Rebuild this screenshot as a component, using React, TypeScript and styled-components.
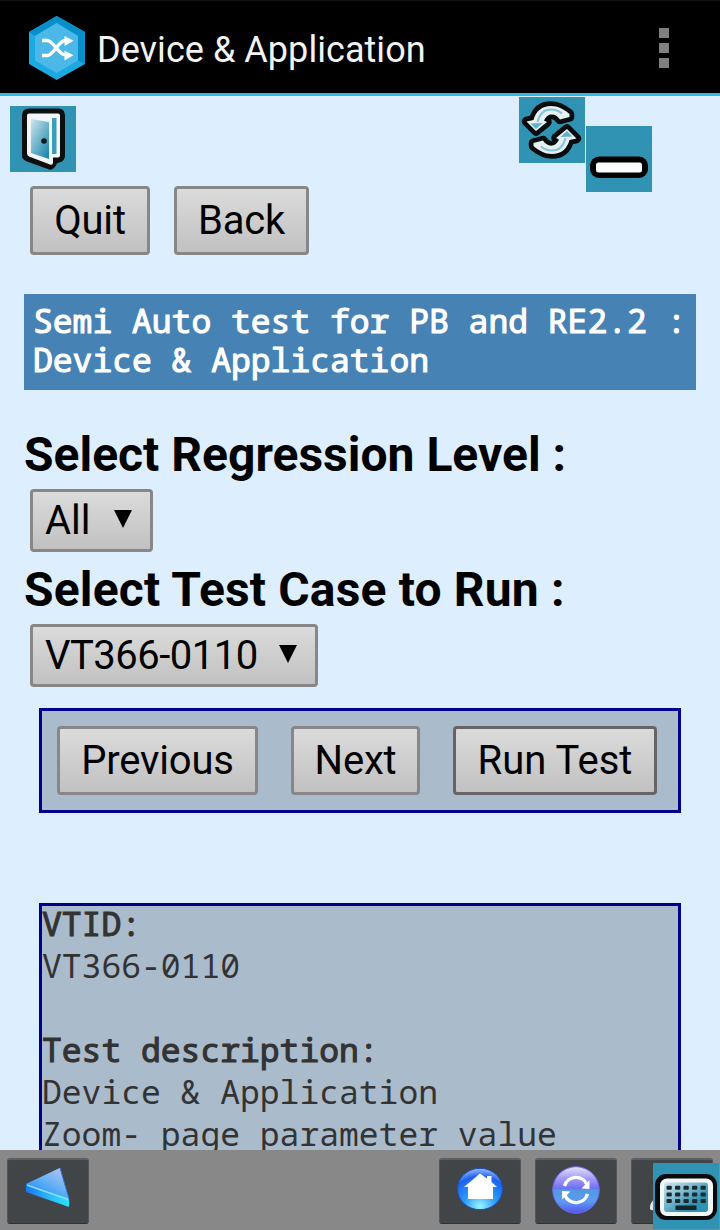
import React from "react";
import styled, { createGlobalStyle } from "styled-components";

const GlobalStyle = createGlobalStyle`
  * { box-sizing: border-box; }
  body { margin: 0; background: #ddeeff; font-family: Roboto, "Liberation Sans", sans-serif; }
`;

const Screen = styled.div`
  position: relative;
  display: flex;
  flex-direction: column;
  width: 720px;
  height: 1230px;
  overflow: hidden;
  background: #ddeeff;
`;

const AppBar = styled.header`
  display: flex;
  align-items: center;
  flex: none;
  height: 96px;
  padding: 1px 51px 0 28px;
  background: #000;
  border-top: 1px solid #111;
  border-bottom: 3px solid #33b5e5;
`;

const AppTitle = styled.h1`
  flex: 1;
  margin: 4px 0 0 11px;
  color: #f3f3f3;
  font-size: 36px;
  font-weight: 400;
  line-height: 44px;
  letter-spacing: 0.05px;
  white-space: nowrap;
`;

const Overflow = styled.div`
  display: grid;
  gap: 5px;
  margin-top: 1px;
`;

const OverflowDot = styled.span`
  width: 10px;
  height: 10px;
  background: #808080;
`;

const Page = styled.main`
  flex: 1;
  min-height: 0;
  overflow: hidden;
  padding: 90px 24px 0;
`;

const FloatingTile = styled.div<{ $x: number; $y: number }>`
  position: absolute;
  left: ${(p) => p.$x}px;
  top: ${(p) => p.$y}px;
  width: 66px;
  height: 66px;
  background: #3093b3;

  svg { display: block; }
`;

const ButtonRow = styled.div`
  display: flex;
  gap: 24px;
  padding-left: 6px;
`;

const Button = styled.button<{ $width: number; $strong?: boolean }>`
  flex: none;
  width: ${(p) => p.$width}px;
  height: 69px;
  padding: 1px 0 0;
  border: 3px solid ${(p) => (p.$strong ? "#666464" : "#888686")};
  border-radius: 4px;
  background: linear-gradient(#dbdbdb, #c1c1c1);
  color: #000;
  font: 400 40px/62px Roboto, "Liberation Sans", sans-serif;
  letter-spacing: ${(p) => (p.$strong ? "0" : "-0.2px")};
  white-space: nowrap;
`;

const Banner = styled.div`
  height: 96px;
  margin-top: 39px;
  padding: 7px 9px;
  background: #4682b4;
  color: #fff;
  font: 400 33px/39px "Droid Sans Mono", "Noto Sans Mono", "DejaVu Sans Mono", monospace;
  -webkit-text-stroke: 1.1px #fff;
  white-space: nowrap;
`;

const FieldLabel = styled.h2<{ $top: number; $tracking?: number }>`
  margin: ${(p) => p.$top}px 0 6px;
  color: #000;
  font-size: 48px;
  font-weight: 700;
  line-height: 56px;
  letter-spacing: ${(p) => p.$tracking ?? 0}px;
  white-space: nowrap;
`;

const Select = styled.div<{ $width: number; $tracking?: number }>`
  display: flex;
  justify-content: space-between;
  width: ${(p) => p.$width}px;
  height: 63px;
  margin-left: 6px;
  padding: 0 18px 0 12px;
  border: 3px solid #888686;
  border-radius: 4px;
  background: linear-gradient(#dbdbdb, #c1c1c1);
  color: #000;
  font-size: 40px;
  line-height: 58px;
  letter-spacing: ${(p) => p.$tracking ?? 0}px;
  white-space: nowrap;
`;

const Caret = styled.i`
  width: 18px;
  height: 18px;
  margin-top: 18px;
  background: #000;
  clip-path: polygon(0 0, 100% 0, 50% 100%);
`;

const Panel = styled.section`
  display: flex;
  gap: 33px;
  height: 105px;
  margin: 21px 15px 0;
  padding: 15px;
  border: 3px solid #00008b;
  background: #aabbcc;
`;

const Details = styled.section`
  height: 247px;
  margin: 90px 15px 0;
  border: 3px solid #00008b;
  border-bottom: 0;
  background: #aabbcc;
  color: #333;
  font: 400 33px/36px "Droid Sans Mono", "Noto Sans Mono", "DejaVu Sans Mono", monospace;
  white-space: nowrap;
`;

const DetailLine = styled.div<{ $bold?: boolean }>`
  height: 42px;
  -webkit-text-stroke: ${(p) => (p.$bold ? "1.1px #333" : "0")};
`;

const Toolbar = styled.footer`
  display: flex;
  flex: none;
  gap: 14px;
  height: 80px;
  padding: 8px 7px 0;
  background: #888;
`;

const ToolButton = styled.div<{ $push?: boolean }>`
  flex: none;
  width: 82px;
  height: 66px;
  margin-right: ${(p) => (p.$push ? "auto" : "0")};
  border: 1px solid #53575a;
  border-top: 2px solid #5c6063;
  border-bottom-color: #303436;
  border-radius: 3px;
  background: #414548;

  svg { display: block; }
`;

const AppIcon = () => (
  <svg width="58" height="66" viewBox="28 15 58 66">
    <path d="M56.700 16 85 32v32L56.700 80 29 64V32z" fill="#1ba9e1" />
    <path d="M56.700 16 85 32v32l-7-3.500V36L56.700 23 35 36l-6-4z" fill="#078fc9" />
    <path d="M56.700 23 78 36v24.500L56.700 73 35 60.500V36z" fill="#4bb8e8" />
    <g fill="none" stroke="#fff" strokeWidth="3.400">
      <path d="M42 40.500h5c7 0 11 14.500 18.500 14.500" />
      <path d="M42 55.500h5c7 0 11-15 18.500-15" />
    </g>
    <path d="m64.500 36 9 4.700-9 5.300zM64.500 50.500l9 4.700-9 5.300z" fill="#fff" />
  </svg>
);

const DoorIcon = () => (
  <svg width="66" height="66" viewBox="0 0 66 66">
    <defs>
      <linearGradient id="door" x1="0" y1="0" x2=".8" y2="1">
        <stop offset="0" stopColor="#cfe6ed" />
        <stop offset="1" stopColor="#1f8aae" />
      </linearGradient>
    </defs>
    <path d="M19 2.500h29q7 0 7 7v40q0 6-6 7l-2 1q-3 7-8 6l-22-8q-5-2-5-6V9.500q0-7 7-7z" fill="#0b0f10" />
    <path d="M19 7.500h29q2 0 2 2v40q0 2-2 2h-5v5q0 3-3 2l-21-8q-2-1-2-3v-38q0-2 2-2z" fill="#f2f6f7" />
    <path d="m21 13 18 3v37L21 47z" fill="url(#door)" />
    <path d="M42 12h4.500v36H42z" fill="#3c9cbb" />
    <circle cx="34" cy="35" r="2.800" fill="#07171d" />
  </svg>
);

const SYNC_ARROW = "M7.500 24.500 14.500 23C17 14 23 9 32 9c7 0 13 3.500 18.500 8v3l-9.500 2.500C37 16 28.500 15 25 23.500l3 1.500L17 34z";

const RefreshIcon = () => (
  <svg width="66" height="66" viewBox="0 0 66 66">
    <g fill="#070c0e" stroke="#070c0e" strokeWidth="9.500" strokeLinejoin="round">
      <path d={SYNC_ARROW} />
      <path d={SYNC_ARROW} transform="rotate(180 32.500 33)" />
    </g>
    <g fill="#e9f0f3">
      <path d={SYNC_ARROW} />
      <path d={SYNC_ARROW} transform="rotate(180 32.500 33)" />
    </g>
    <g fill="none" stroke="#85c4da" strokeWidth="2">
      <path d="M18.500 25q3-12.500 13.500-12.500 6 0 11 4M46.500 41q-3 12.500-13.500 12.500-6 0-11-4" />
    </g>
    <path d="m11.500 26.500 12-.5-6.500 6zM53.500 39.500l-12 .5 6.500-6z" fill="#5eb0ce" />
  </svg>
);

const MinusIcon = () => (
  <svg width="66" height="66" viewBox="0 0 66 66">
    <rect x="4" y="30.500" width="58" height="21.500" rx="9" fill="#000" />
    <rect x="10" y="36.500" width="46" height="10" rx="2.500" fill="#fbfcff" />
  </svg>
);

const KeyboardIcon = () => (
  <svg width="66" height="66" viewBox="0 0 66 66">
    <defs>
      <linearGradient id="keys" x1="0" y1="0" x2="1" y2="1">
        <stop offset="0" stopColor="#d7e9ef" />
        <stop offset=".7" stopColor="#2e93b3" />
      </linearGradient>
    </defs>
    <rect x="2" y="11" width="62" height="46" rx="11" fill="#080b0c" />
    <rect x="7" y="15.500" width="53" height="37.500" rx="7" fill="#f3f6f7" />
    <rect x="11" y="19.500" width="44" height="29.500" rx="3" fill="url(#keys)" />
    {[22.800, 29.500, 36].map((y) =>
      [13.500, 22, 30.500, 39, 47.500].map((x) => (
        <rect key={`${x}-${y}`} x={x} y={y} width="5.300" height="4" rx="1" fill="#1d2a30" />
      ))
    )}
    <rect x="22.500" y="42.500" width="21" height="4.500" fill="#15242a" />
  </svg>
);

const BackIcon = () => (
  <svg width="80" height="63" viewBox="8 1160 80 63">
    <defs>
      <linearGradient id="face" x1="1" y1="0" x2=".2" y2="1">
        <stop offset="0" stopColor="#c2c4ef" />
        <stop offset=".5" stopColor="#68b2f5" />
        <stop offset="1" stopColor="#1688f5" />
      </linearGradient>
      <linearGradient id="edge">
        <stop offset="0" stopColor="#1778ee" />
        <stop offset=".5" stopColor="#2db4f8" />
        <stop offset="1" stopColor="#22e5ff" />
      </linearGradient>
    </defs>
    <path d="m26 1184 34-16 9 31v8l-43-15z" fill="url(#edge)" />
    <path d="m26 1184 34-16 8 30z" fill="url(#face)" />
    <path d="m27 1185 41 14.500" stroke="#8cdcff" strokeWidth="1.500" />
    <path d="m60 1168 9 31" stroke="#3b6fd8" strokeWidth="1" />
  </svg>
);

const HomeIcon = () => (
  <svg width="80" height="63" viewBox="440 1160 80 63">
    <defs>
      <radialGradient id="home" cx=".5" cy=".92" r=".9">
        <stop offset="0" stopColor="#9cf4ff" />
        <stop offset=".4" stopColor="#2b9cfb" />
        <stop offset=".8" stopColor="#1c62ee" />
        <stop offset="1" stopColor="#8eb4fa" />
      </radialGradient>
    </defs>
    <ellipse cx="480" cy="1189" rx="22.500" ry="20.700" fill="url(#home)" stroke="#1c4fc4" />
    <path d="m480 1173.500 7 5v-2.500h4.500v6l5.500 5h-4v12h-25v-12h-4z" fill="#fff" />
  </svg>
);

const SyncIcon = () => (
  <svg width="80" height="63" viewBox="536 1160 80 63">
    <defs>
      <linearGradient id="orb" x1="0" y1="0" x2="0" y2="1">
        <stop offset="0" stopColor="#e6e2fc" />
        <stop offset=".25" stopColor="#a39bf6" />
        <stop offset=".47" stopColor="#6f70f2" />
        <stop offset=".5" stopColor="#519ae0" />
        <stop offset=".75" stopColor="#5d9af5" />
        <stop offset="1" stopColor="#5652f0" />
      </linearGradient>
    </defs>
    <circle cx="576" cy="1190" r="23.300" fill="url(#orb)" stroke="#6c66ee" />
    <g fill="none" stroke="#fff" strokeWidth="3.400">
      <path d="M564.500 1186a12 12 0 0 1 22.500-1.500M587.500 1194a12 12 0 0 1-22.500 1.500" />
    </g>
    <path d="m581.500 1188.500 8 .5V1180zM570.500 1191.500l-8.500-.5v8.500z" fill="#fff" />
  </svg>
);

const PersonIcon = () => (
  <svg width="80" height="63" viewBox="632 1160 80 63">
    <path d="M650 1209q-1-5 5-11v12q-4 1-5-1z" fill="#e6e6e6" />
    <path d="M652 1170q1-3 4-3v3z" fill="#56595b" />
  </svg>
);

export default function App() {
  return (
    <>
      <GlobalStyle />
      <Screen>
        <AppBar>
          <AppIcon />
          <AppTitle>Device &amp; Application</AppTitle>
          <Overflow>
            <OverflowDot />
            <OverflowDot />
            <OverflowDot />
          </Overflow>
        </AppBar>
        <Page>
          <ButtonRow>
            <Button $width={120}>Quit</Button>
            <Button $width={135}>Back</Button>
          </ButtonRow>
          <Banner>
            Semi Auto test for PB and RE2.2 :
            <br />
            Device &amp; Application
          </Banner>
          <FieldLabel $top={37}>Select Regression Level :</FieldLabel>
          <Select $width={123}>
            All
            <Caret />
          </Select>
          <FieldLabel $top={10} $tracking={0.16}>Select Test Case to Run :</FieldLabel>
          <Select $width={288} $tracking={-0.5}>
            VT366-0110
            <Caret />
          </Select>
          <Panel>
            <Button $width={201}>Previous</Button>
            <Button $width={129}>Next</Button>
            <Button $width={204} $strong>Run Test</Button>
          </Panel>
          <Details>
            <DetailLine $bold>VTID:</DetailLine>
            <DetailLine>VT366-0110</DetailLine>
            <DetailLine />
            <DetailLine $bold>Test description:</DetailLine>
            <DetailLine>Device &amp; Application</DetailLine>
            <DetailLine>Zoom- page parameter value</DetailLine>
          </Details>
        </Page>
        <Toolbar>
          <ToolButton $push><BackIcon /></ToolButton>
          <ToolButton><HomeIcon /></ToolButton>
          <ToolButton><SyncIcon /></ToolButton>
          <ToolButton><PersonIcon /></ToolButton>
        </Toolbar>
        <FloatingTile $x={10} $y={106}><DoorIcon /></FloatingTile>
        <FloatingTile $x={519} $y={97}><RefreshIcon /></FloatingTile>
        <FloatingTile $x={586} $y={126}><MinusIcon /></FloatingTile>
        <FloatingTile $x={653} $y={1163}><KeyboardIcon /></FloatingTile>
      </Screen>
    </>
  );
}
